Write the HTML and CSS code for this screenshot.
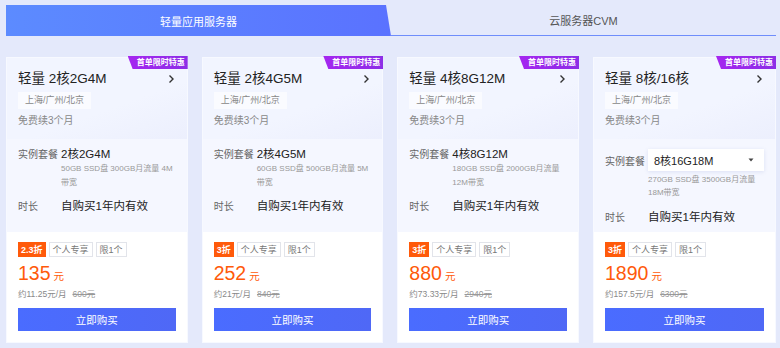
FILE: index.html
```html
<!DOCTYPE html>
<html lang="zh-CN">

<head>
    <meta charset="utf-8">
    <meta name="viewport" content="width=device-width, initial-scale=1.0">
    <title>轻量应用服务器</title>
    <link rel="stylesheet" href="styles.css">
</head>

<body>
    <nav class="tabs">
        <div class="tab aktiv">轻量应用服务器</div>
        <div class="tab">云服务器CVM</div>
    </nav>

    <section class="kort">
        <article class="produkt">
            <span class="badge">首单限时特惠</span>
            <div class="top">
                <h2 class="titel">轻量 2核2G4M
                    <svg class="pil" width="7" height="10" viewBox="0 0 7 10"><path d="M1.5 1.5 5 5 1.5 8.5" fill="none" stroke="#333" stroke-width="1.4"/></svg>
                </h2>
                <span class="region">上海/广州/北京</span>
                <p class="gratis">免费续3个月</p>
            </div>
            <div class="midte">
                <div class="raekke"><span class="label">实例套餐</span><span class="vaerdi">2核2G4M</span></div>
                <p class="beskriv">50GB SSD盘 300GB月流量 4M 带宽</p>
                <div class="raekke tid"><span class="label">时长</span><span class="vaerdi">自购买1年内有效</span></div>
            </div>
            <div class="bund">
                <div class="maerker"><span class="rabat">2.3折</span><span class="maerke">个人专享</span><span class="maerke">限1个</span></div>
                <p class="pris">135<span>元</span></p>
                <p class="maaned">约11.25元/月<s>600元</s></p>
                <button>立即购买</button>
            </div>
        </article>

        <article class="produkt">
            <span class="badge">首单限时特惠</span>
            <div class="top">
                <h2 class="titel">轻量 2核4G5M
                    <svg class="pil" width="7" height="10" viewBox="0 0 7 10"><path d="M1.5 1.5 5 5 1.5 8.5" fill="none" stroke="#333" stroke-width="1.4"/></svg>
                </h2>
                <span class="region">上海/广州/北京</span>
                <p class="gratis">免费续3个月</p>
            </div>
            <div class="midte">
                <div class="raekke"><span class="label">实例套餐</span><span class="vaerdi">2核4G5M</span></div>
                <p class="beskriv">60GB SSD盘 500GB月流量 5M 带宽</p>
                <div class="raekke tid"><span class="label">时长</span><span class="vaerdi">自购买1年内有效</span></div>
            </div>
            <div class="bund">
                <div class="maerker"><span class="rabat">3折</span><span class="maerke">个人专享</span><span class="maerke">限1个</span></div>
                <p class="pris">252<span>元</span></p>
                <p class="maaned">约21元/月<s>840元</s></p>
                <button>立即购买</button>
            </div>
        </article>

        <article class="produkt">
            <span class="badge">首单限时特惠</span>
            <div class="top">
                <h2 class="titel">轻量 4核8G12M
                    <svg class="pil" width="7" height="10" viewBox="0 0 7 10"><path d="M1.5 1.5 5 5 1.5 8.5" fill="none" stroke="#333" stroke-width="1.4"/></svg>
                </h2>
                <span class="region">上海/广州/北京</span>
                <p class="gratis">免费续3个月</p>
            </div>
            <div class="midte">
                <div class="raekke"><span class="label">实例套餐</span><span class="vaerdi">4核8G12M</span></div>
                <p class="beskriv">180GB SSD盘 2000GB月流量 12M带宽</p>
                <div class="raekke tid"><span class="label">时长</span><span class="vaerdi">自购买1年内有效</span></div>
            </div>
            <div class="bund">
                <div class="maerker"><span class="rabat">3折</span><span class="maerke">个人专享</span><span class="maerke">限1个</span></div>
                <p class="pris">880<span>元</span></p>
                <p class="maaned">约73.33元/月<s>2940元</s></p>
                <button>立即购买</button>
            </div>
        </article>

        <article class="produkt">
            <span class="badge">首单限时特惠</span>
            <div class="top">
                <h2 class="titel">轻量 8核/16核
                    <svg class="pil" width="7" height="10" viewBox="0 0 7 10"><path d="M1.5 1.5 5 5 1.5 8.5" fill="none" stroke="#333" stroke-width="1.4"/></svg>
                </h2>
                <span class="region">上海/广州/北京</span>
                <p class="gratis">免费续3个月</p>
            </div>
            <div class="midte valg">
                <div class="raekke"><span class="label">实例套餐</span>
                    <span class="vaelger">8核16G18M
                        <svg width="6" height="4" viewBox="0 0 6 4"><path d="M0.5 0.5h5L3 3.5z" fill="#444"/></svg>
                    </span>
                </div>
                <p class="beskriv">270GB SSD盘 3500GB月流量 18M带宽</p>
                <div class="raekke tid"><span class="label">时长</span><span class="vaerdi">自购买1年内有效</span></div>
            </div>
            <div class="bund">
                <div class="maerker"><span class="rabat">3折</span><span class="maerke">个人专享</span><span class="maerke">限1个</span></div>
                <p class="pris">1890<span>元</span></p>
                <p class="maaned">约157.5元/月<s>6300元</s></p>
                <button>立即购买</button>
            </div>
        </article>
    </section>
</body></html>
```

FILE: styles.css
```css
* {
    margin: 0px;
    box-sizing: border-box;
}

body {
    background-color: #e4e9fb;
    font-family: "Liberation Sans", "Noto Sans CJK SC", sans-serif;
    padding: 5px 4px 0px 6px;
    color: #222;
}

.tabs {
    display: grid;
    grid-template-columns: 1fr 1fr;
    height: 31px;
}

.tab {
    display: flex;
    align-items: center;
    justify-content: center;
    font-size: 11px;
    color: #555;
    border-bottom: 1px solid #6f8dfb;
}

.tab.aktiv {
    color: white;
    background: linear-gradient(90deg, #5c8bff, #5a72ff);
    clip-path: polygon(0 0, calc(100% - 5px) 0, 100% 100%, 0 100%);
    border-bottom: none;
}

.kort {
    display: grid;
    grid-template-columns: repeat(4, 1fr);
    grid-gap: 14px;
    margin-top: 21px;
}

.produkt {
    position: relative;
    background-color: white;
    border: 1px solid #f7f9ff;
}

.badge {
    position: absolute;
    top: -2px;
    right: -1px;
    width: 60px;
    height: 13px;
    line-height: 13px;
    padding-left: 6px;
    font-size: 8px;
    font-weight: bold;
    text-align: center;
    color: white;
    background: linear-gradient(90deg, #a526f0, #8c2ee6);
    clip-path: polygon(0 0, 100% 0, 100% 100%, 5px 100%);
    white-space: nowrap;
}

.top {
    height: 81px;
    padding: 11px 11px 0px 11px;
    background: linear-gradient(160deg, #f2f5ff 60%, #eceffd 100%);
}

.titel {
    display: flex;
    justify-content: space-between;
    align-items: center;
    font-size: 13.5px;
    font-weight: normal;
    line-height: 20px;
    color: #222;
}

.pil {
    margin-right: 1px;
}

.region {
    display: inline-block;
    margin-top: 3px;
    height: 17px;
    line-height: 17px;
    padding: 0px 7px;
    font-size: 9px;
    color: #888;
    background-color: #fafbff;
}

.gratis {
    margin-top: 4px;
    font-size: 10px;
    line-height: 16px;
    color: #888;
}

.midte {
    height: 93px;
    padding: 5px 11px 0px 11px;
    background-color: #f5f7ff;
}

.midte.valg {
    padding-top: 10px;
}

.raekke {
    display: flex;
    align-items: center;
    min-height: 18px;
}

.label {
    width: 43px;
    flex: none;
    font-size: 10px;
    color: #666;
}

.vaerdi {
    font-size: 11.5px;
    color: #222;
}

.vaelger {
    display: flex;
    align-items: center;
    justify-content: space-between;
    width: 116px;
    height: 22px;
    padding: 0px 10px 0px 6px;
    font-size: 11px;
    background-color: white;
    box-shadow: 0px 1px 4px rgba(80, 100, 180, 0.15);
}

.beskriv {
    margin-left: 43px;
    font-size: 8px;
    line-height: 14px;
    color: #999;
}

.valg .beskriv {
    margin-top: 2px;
    line-height: 13px;
}

.raekke.tid {
    margin-top: 5px;
    min-height: 20px;
}

.valg .raekke.tid {
    margin-top: 7px;
}

.bund {
    padding: 10px 11px 11px 11px;
}

.maerker {
    display: flex;
    gap: 3px;
    height: 15px;
}

.rabat,
.maerke {
    display: flex;
    align-items: center;
    padding: 0px 3px;
    font-size: 9px;
}

.rabat {
    background-color: #ff5a0a;
    color: white;
    font-weight: bold;
    padding: 0px 3px;
}

.maerke {
    border: 1px solid #e2e4ea;
    color: #777;
}

.pris {
    margin-top: 4px;
    line-height: 24px;
    font-size: 19.5px;
    color: #ff5a0a;
}

.pris span {
    font-size: 10.5px;
    margin-left: 3px;
}

.maaned {
    line-height: 12px;
    font-size: 8.5px;
    color: #888;
}

.maaned s {
    margin-left: 6px;
    color: #999;
}

button {
    display: block;
    width: 100%;
    height: 23px;
    margin-top: 8px;
    border: none;
    font-family: "Liberation Sans", "Noto Sans CJK SC", sans-serif;
    font-size: 10.5px;
    color: white;
    background: linear-gradient(90deg, #4a6cff, #4f68f6);
    cursor: pointer;
}
```
